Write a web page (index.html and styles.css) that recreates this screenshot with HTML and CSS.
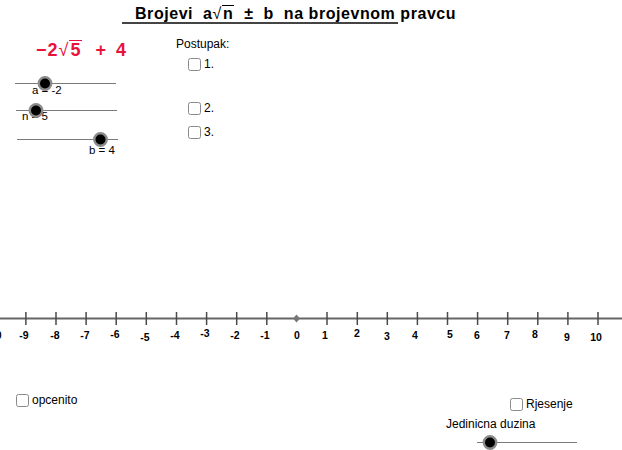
FILE: index.html
```html
<!DOCTYPE html>
<html>
<head>
<meta charset="utf-8">
<link rel="stylesheet" href="styles.css">
</head>
<body>
<div class="applet">
  <svg class="graphics" width="622" height="450" viewBox="0 0 622 450">
    <!-- sliders -->
    <g class="slider-line">
      <line x1="15" y1="83.5" x2="116" y2="83.5"/>
      <line x1="16" y1="110.5" x2="117" y2="110.5"/>
      <line x1="17" y1="139.5" x2="118" y2="139.5"/>
      <line x1="477" y1="442.5" x2="577" y2="442.5"/>
    </g>
    <!-- axis -->
    <line class="axis" x1="0" y1="318.5" x2="622" y2="318.5"/>
    <g class="ticks">
      <line x1="-5.3" y1="312" x2="-5.3" y2="325"/>
      <line x1="25.9" y1="312" x2="25.9" y2="325"/>
      <line x1="56" y1="312" x2="56" y2="325"/>
      <line x1="86.1" y1="312" x2="86.1" y2="325"/>
      <line x1="116.2" y1="312" x2="116.2" y2="325"/>
      <line x1="146.3" y1="312" x2="146.3" y2="325"/>
      <line x1="176.5" y1="312" x2="176.5" y2="325"/>
      <line x1="206.6" y1="312" x2="206.6" y2="325"/>
      <line x1="236.7" y1="312" x2="236.7" y2="325"/>
      <line x1="266.8" y1="312" x2="266.8" y2="325"/>
      <line x1="327" y1="312" x2="327" y2="325"/>
      <line x1="357.3" y1="312" x2="357.3" y2="325"/>
      <line x1="387.3" y1="312" x2="387.3" y2="325"/>
      <line x1="417.4" y1="312" x2="417.4" y2="325"/>
      <line x1="447.5" y1="312" x2="447.5" y2="325"/>
      <line x1="477.6" y1="312" x2="477.6" y2="325"/>
      <line x1="507.7" y1="312" x2="507.7" y2="325"/>
      <line x1="537.8" y1="312" x2="537.8" y2="325"/>
      <line x1="567.9" y1="312" x2="567.9" y2="325"/>
      <line x1="598" y1="312" x2="598" y2="325"/>
    </g>
    <path class="origin" d="M296.5 314.5 L300 318.5 L296.5 322.5 L293 318.5 Z"/>
    <g class="tick-labels">
      <text x="-6" y="339">-10</text>
      <text x="24" y="339">-9</text>
      <text x="55" y="339">-8</text>
      <text x="85" y="339">-7</text>
      <text x="115" y="338">-6</text>
      <text x="145" y="341">-5</text>
      <text x="175" y="339">-4</text>
      <text x="205" y="337">-3</text>
      <text x="235" y="339">-2</text>
      <text x="265" y="339">-1</text>
      <text x="297" y="339">0</text>
      <text x="325" y="339">1</text>
      <text x="357" y="337">2</text>
      <text x="387" y="340">3</text>
      <text x="415" y="339">4</text>
      <text x="450" y="338">5</text>
      <text x="477" y="339">6</text>
      <text x="507" y="339">7</text>
      <text x="535" y="338">8</text>
      <text x="567" y="341">9</text>
      <text x="596" y="341">10</text>
    </g>
    <!-- slider labels -->
    <g class="slider-labels">
      <text x="32" y="94">a = -2</text>
      <text x="22" y="120">n = 5</text>
      <text x="89" y="154">b = 4</text>
    </g>
    <!-- knobs -->
    <g class="knob">
      <circle cx="45" cy="83.5" r="6.2"/>
      <circle cx="36" cy="110.5" r="6.2"/>
      <circle cx="100.5" cy="139.5" r="6.2"/>
      <circle cx="490" cy="442.5" r="6.2"/>
    </g>
  </svg>

  <div class="title">Brojevi&nbsp; a<span class="rt">√</span><span class="rad">n</span>&nbsp; ±&nbsp; b&nbsp; na brojevnom pravcu</div>
  <div class="title-rule"></div>

  <div class="formula">−2<span class="rt">√</span><span class="rad">5</span><span class="op">+</span>4</div>

  <div class="text postupak">Postupak:</div>

  <label class="check step1"><span class="box"></span>1.</label>
  <label class="check step2"><span class="box"></span>2.</label>
  <label class="check step3"><span class="box"></span>3.</label>
  <label class="check opcenito"><span class="box"></span>opcenito</label>
  <label class="check rjesenje"><span class="box"></span>Rjesenje</label>

  <div class="text jedinicna">Jedinicna duzina</div>
</div>
</body>
</html>
```

FILE: styles.css
```css
html, body {
  margin: 0;
  padding: 0;
  background: #ffffff;
}

.applet {
  position: relative;
  width: 622px;
  height: 450px;
  overflow: hidden;
  font-family: "Liberation Sans", Arial, sans-serif;
  color: #000;
}

.graphics {
  position: absolute;
  left: 0;
  top: 0;
}

.slider-line line {
  stroke: #7a7a7a;
  stroke-width: 1;
}

.axis {
  stroke: #666666;
  stroke-width: 2;
}

.ticks line {
  stroke: #4a4a4a;
  stroke-width: 1.5;
}

.origin {
  fill: #777777;
}

.tick-labels text {
  font-family: "Liberation Sans", Arial, sans-serif;
  font-weight: bold;
  font-size: 10.5px;
  text-anchor: middle;
  fill: #000;
}

.slider-labels text {
  font-family: "Liberation Sans", Arial, sans-serif;
  font-size: 11.5px;
  fill: #000;
}

.knob circle {
  fill: #000;
  stroke: #8a8a8a;
  stroke-width: 2.4;
}

.title {
  position: absolute;
  left: 135px;
  top: 4px;
  font-size: 16px;
  font-weight: bold;
  line-height: 19px;
  white-space: nowrap;
  letter-spacing: 0.55px;
}

.rt {
  font-weight: normal;
}

.rad {
  border-top: 1.5px solid currentColor;
  padding: 0 1px;
  display: inline-block;
  line-height: 1;
}

.title-rule {
  position: absolute;
  left: 122px;
  top: 22px;
  width: 276px;
  height: 1.5px;
  background: #444;
}

.formula {
  position: absolute;
  left: 36px;
  top: 40px;
  font-size: 18px;
  font-weight: bold;
  color: #e8133c;
  white-space: nowrap;
  line-height: 21px;
  letter-spacing: 1px;
}

.op {
  display: inline-block;
  margin: 0 9px 0 13px;
}

.text {
  position: absolute;
  font-size: 12px;
  line-height: 14px;
  white-space: nowrap;
}

.postupak {
  left: 176px;
  top: 37px;
}

.jedinicna {
  left: 446px;
  top: 417px;
}

.check {
  position: absolute;
  display: flex;
  align-items: center;
  gap: 3px;
  font-size: 12px;
  line-height: 14px;
  white-space: nowrap;
}

.box {
  width: 11px;
  height: 11px;
  border: 1.5px solid #8a8a8a;
  border-radius: 2.5px;
  background: #fff;
}

.step1 { left: 188px; top: 57px; }
.step2 { left: 188px; top: 101px; }
.step3 { left: 188px; top: 125px; }
.opcenito { left: 16px; top: 393px; }
.rjesenje { left: 510px; top: 397px; }
```
